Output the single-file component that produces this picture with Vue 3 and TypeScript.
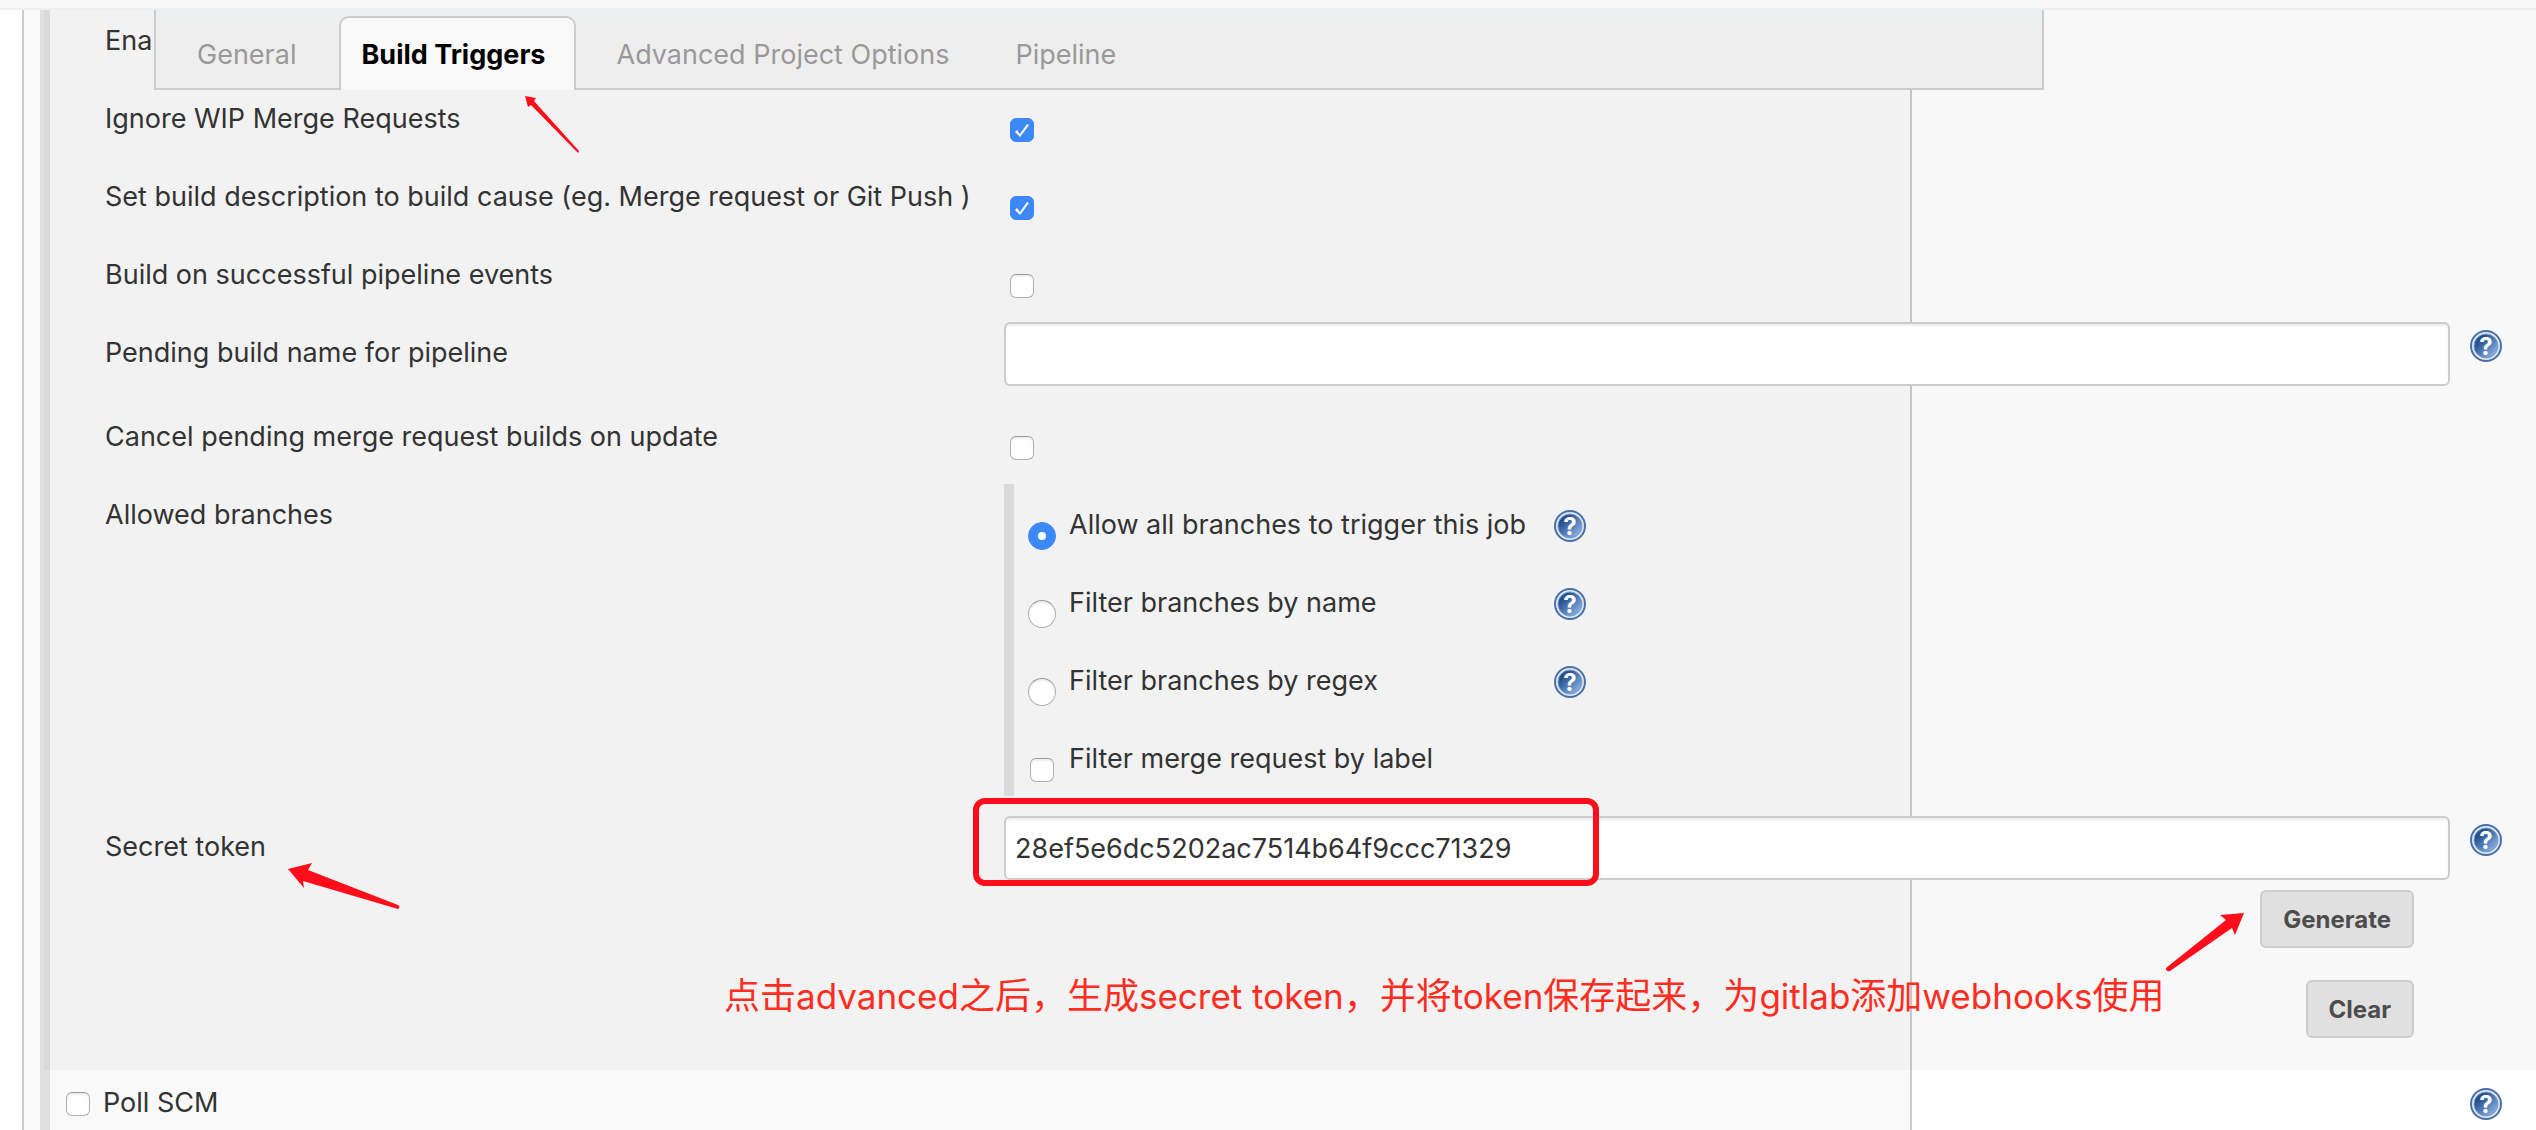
<script setup lang="ts">
import { ref } from 'vue'

interface BranchOption {
  value: string
  label: string
}

const tabs: string[] = ['General', 'Build Triggers', 'Advanced Project Options', 'Pipeline']
const activeTab = ref('Build Triggers')

const ignoreWip = ref(true)
const setDescription = ref(true)
const pipelineEvents = ref(false)
const pendingName = ref('')
const cancelPending = ref(false)
const branchFilter = ref('all')
const filterByLabel = ref(false)
const secretToken = ref('28ef5e6dc5202ac7514b64f9ccc71329')
const pollScm = ref(false)

const branchOptions: BranchOption[] = [
  { value: 'all', label: 'Allow all branches to trigger this job' },
  { value: 'name', label: 'Filter branches by name' },
  { value: 'regex', label: 'Filter branches by regex' },
]
</script>

<template>
  <div class="page">
    <svg class="defs" width="0" height="0" aria-hidden="true">
      <defs>
        <linearGradient id="helpFill" x1="0" y1="0" x2="1" y2="1">
          <stop offset="0.25" stop-color="#24508f" />
          <stop offset="0.85" stop-color="#86aede" />
        </linearGradient>
        <symbol id="help" viewBox="0 0 32 32">
          <circle cx="16" cy="16" r="15" fill="#dde6f2" stroke="#4a70a8" stroke-width="2" />
          <circle cx="16" cy="16" r="12" fill="url(#helpFill)" stroke="#7f9dc6" stroke-width="1" />
          <text x="16" y="25" text-anchor="middle" font-family="Inter, sans-serif" font-size="24" font-weight="700" fill="#fff">?</text>
        </symbol>
      </defs>
    </svg>

    <header class="topbar"></header>

    <nav class="tabs">
      <button
        v-for="tab in tabs"
        :key="tab"
        type="button"
        class="tab"
        :class="{ active: tab === activeTab }"
        @click="activeTab = tab"
      >{{ tab }}</button>
    </nav>

    <main class="panel">
      <form class="form" @submit.prevent>
        <section class="nested">
          <div class="row"><span class="label">Ena</span></div>
          <div class="row">
            <label class="label" for="wip">Ignore WIP Merge Requests</label>
            <input id="wip" v-model="ignoreWip" class="check" type="checkbox" />
          </div>
          <div class="row">
            <label class="label" for="desc">Set build description to build cause (eg. Merge request or Git Push )</label>
            <input id="desc" v-model="setDescription" class="check" type="checkbox" />
          </div>
          <div class="row">
            <label class="label" for="events">Build on successful pipeline events</label>
            <input id="events" v-model="pipelineEvents" class="check" type="checkbox" />
          </div>
          <div class="row tall">
            <label class="label" for="pending">Pending build name for pipeline</label>
            <input id="pending" v-model="pendingName" class="text" type="text" />
            <a class="help" href="#" aria-label="Help"><svg><use href="#help" /></svg></a>
          </div>
          <div class="row">
            <label class="label" for="cancel">Cancel pending merge request builds on update</label>
            <input id="cancel" v-model="cancelPending" class="check" type="checkbox" />
          </div>
          <div class="row branches">
            <span class="label">Allowed branches</span>
            <div class="group">
              <div v-for="option in branchOptions" :key="option.value" class="option">
                <input
                  :id="option.value"
                  v-model="branchFilter"
                  class="radio"
                  type="radio"
                  name="branches"
                  :value="option.value"
                />
                <label class="label" :for="option.value">{{ option.label }}</label>
                <a class="help" href="#" aria-label="Help"><svg><use href="#help" /></svg></a>
              </div>
              <div class="option">
                <input id="byLabel" v-model="filterByLabel" class="check" type="checkbox" />
                <label class="label" for="byLabel">Filter merge request by label</label>
              </div>
            </div>
          </div>
          <div class="row">
            <label class="label" for="token">Secret token</label>
            <div class="token">
              <input id="token" v-model="secretToken" class="text" type="text" />
              <div class="actions">
                <button type="button" class="button">Generate</button>
                <button type="button" class="button">Clear</button>
              </div>
              <div class="highlight"></div>
            </div>
            <a class="help" href="#" aria-label="Help"><svg><use href="#help" /></svg></a>
          </div>
        </section>
        <section class="poll">
          <input id="poll" v-model="pollScm" class="check" type="checkbox" />
          <label class="label" for="poll">Poll SCM</label>
          <a class="help" href="#" aria-label="Help"><svg><use href="#help" /></svg></a>
        </section>
      </form>
    </main>

    <p class="note">点击<span>advanced</span>之后，生成<span>secret token</span>，并将<span>token</span>保存起来，为<span>gitlab</span>添加<span>webhooks</span>使用</p>
    <svg class="arrow to-tab" viewBox="0 0 56 58">
      <path d="M0 0 L11 2 L9 5 L54 55 L53 57 L6 9 L3 11 Z" />
    </svg>
    <svg class="arrow to-label" viewBox="0 0 114 48">
      <path d="M0 6 L24 0 L20 7 L110 42 Q113 44 110 46 L15 18 L16 25 Z" />
    </svg>
    <svg class="arrow to-button" viewBox="0 0 80 60">
      <path d="M79 0 L70 22 L67 15 L5 58 Q1 59 1 55 L61 7 L55 2 Z" />
    </svg>
  </div>
</template>

<style>
body {
  background: #fff;
}
</style>

<style scoped>
.page {
  position: relative;
  min-height: 100vh;
  display: flex;
  flex-direction: column;
  overflow: hidden;
  color: #333;
  font-family: Inter, "Noto Sans CJK SC", sans-serif;
  font-size: 27px;
  line-height: 36px;
}
.page * {
  box-sizing: border-box;
}
.defs {
  position: absolute;
}
.topbar {
  height: 10px;
  background: #f8f8f8;
  border-bottom: 2px solid #ebeff2;
}
.tabs {
  position: absolute;
  z-index: 1;
  top: 10px;
  left: 154px;
  right: 492px;
  height: 80px;
  padding: 6px 0 0 2px;
  display: flex;
  background: linear-gradient(#ebeef0, #eee 16px);
  border: solid #ccc;
  border-width: 0 2px 2px;
}
.tab {
  height: 74px;
  padding: 4px 33px 0;
  border: 0;
  background: none;
  color: #999;
  font: inherit;
  white-space: nowrap;
}
.tab:first-child {
  padding: 4px 43px 0 39px;
}
.tab.active {
  margin-right: 8px;
  padding: 2px 28px 0 20px;
  background: #f9f9f9;
  border: solid #ccc;
  border-width: 2px 2px 0;
  border-radius: 10px 10px 0 0;
  color: #000;
  font-weight: 700;
}
.panel {
  flex: 1;
  display: flex;
  flex-direction: column;
  margin: 0 624px 0 22px;
  padding-left: 16px;
  background: #f9f9f9;
  border: solid #ccc;
  border-width: 0 2px;
}
.form {
  flex: 1;
  margin-right: -626px;
  border-left: 10px solid #e0e0e0;
}
.nested {
  margin-left: -6px;
  padding-left: 61px;
  background: rgba(0, 0, 0, 0.026);
}
.row {
  display: grid;
  grid-template-columns: 899px minmax(0, 1fr) 86px;
  align-items: start;
  min-height: 78px;
}
.row.tall {
  min-height: 84px;
}
.row.branches {
  padding-bottom: 20px;
}
.label {
  padding-top: 13px;
  white-space: nowrap;
}
.help {
  width: 32px;
  height: 32px;
  margin: 8px 0 0 20px;
}
.help svg {
  display: block;
  width: 32px;
  height: 32px;
}
.check,
.radio {
  appearance: none;
  width: 24px;
  height: 24px;
  margin: 30px 0 0 6px;
  background: #fff;
  border: 1px solid #b0b0b0;
  border-top-color: #999;
  border-radius: 6px;
  box-shadow: inset 0 2px 2px #eee;
}
.check:checked,
.radio:checked {
  background: #3d88f7;
  border-color: #3d88f7;
  box-shadow: none;
}
.check:checked::after {
  content: "";
  display: block;
  width: 22px;
  height: 22px;
  background: #fff;
  clip-path: polygon(4px 13px, 6px 11px, 9px 15px, 16px 5px, 18px 6px, 9px 18px);
}
.radio {
  width: 28px;
  height: 28px;
  border-radius: 50%;
}
.radio:checked::after {
  content: "";
  display: block;
  width: 8px;
  height: 8px;
  margin: 9px;
  border-radius: 50%;
  background: #fff;
}
.text {
  width: 100%;
  height: 64px;
  padding: 0 9px;
  background: #fff;
  border: 2px solid #ccc;
  border-radius: 6px;
  box-shadow: inset 0 2px 2px #eee;
  color: #333;
  font: inherit;
}
.group {
  border-left: 10px solid #dadada;
}
.option {
  display: grid;
  grid-template-columns: 55px 465px 1fr;
  align-items: start;
  height: 78px;
  padding-top: 10px;
}
.option .radio {
  margin: 28px 0 0 14px;
}
.option .check {
  margin: 30px 0 0 16px;
}
.option .help {
  margin-top: 16px;
}
.token {
  position: relative;
}
.actions {
  display: flex;
  flex-direction: column;
  align-items: flex-end;
  gap: 32px;
  padding: 10px 36px 32px 0;
}
.button {
  height: 58px;
  padding: 2px 21px 0;
  background: #e0e0e0;
  border: 2px solid #ccc;
  border-radius: 6px;
  color: #4d4d4d;
  font: inherit;
  font-size: 24px;
  font-weight: 700;
}
.highlight {
  position: absolute;
  top: -18px;
  left: -31px;
  width: 626px;
  height: 88px;
  border: 6px solid #ff0d1b;
  border-radius: 12px;
  pointer-events: none;
}
.poll {
  display: flex;
  align-items: flex-start;
}
.poll .check {
  margin: 22px 13px 0 16px;
}
.poll .label {
  flex: 1;
  padding-top: 15px;
}
.poll .help {
  margin: 18px 34px 0 0;
}
.note {
  position: absolute;
  top: 970px;
  left: 724px;
  margin: 0;
  color: #ff2d1f;
  font-size: 36px;
  line-height: 52px;
  white-space: nowrap;
}
.note span {
  font-size: 35px;
}
.arrow {
  position: absolute;
  z-index: 2;
  fill: #ff0d1b;
}
.to-tab {
  top: 96px;
  left: 525px;
  width: 56px;
  height: 58px;
}
.to-label {
  top: 863px;
  left: 288px;
  width: 114px;
  height: 48px;
}
.to-button {
  top: 913px;
  left: 2165px;
  width: 80px;
  height: 60px;
}
</style>
